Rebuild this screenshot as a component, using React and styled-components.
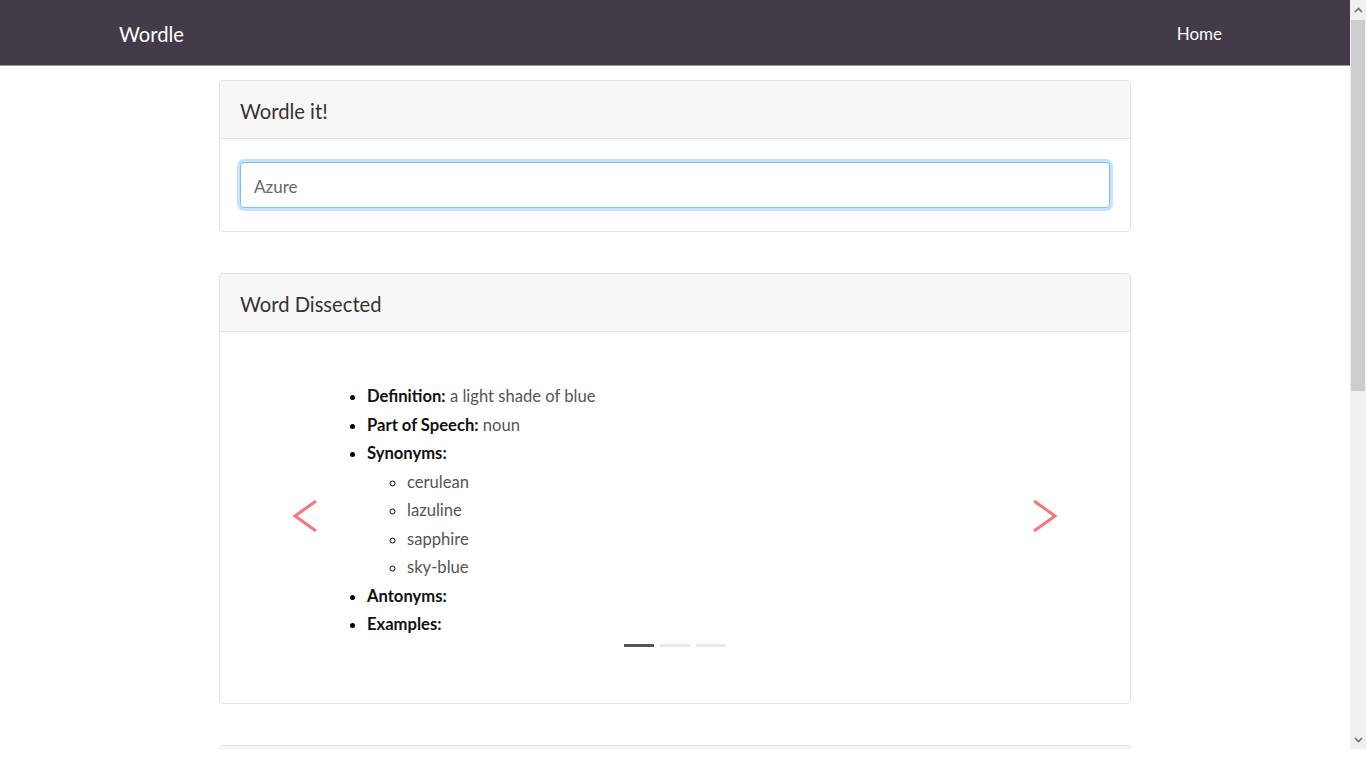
import React from "react";
import styled, { createGlobalStyle } from "styled-components";

const Global = createGlobalStyle`
  html, body { margin: 0; padding: 0; background: #fff; overflow: hidden; }
  body { font-family: "Lato", "Open Sans", sans-serif; color: #212529; }
  * { box-sizing: border-box; }
`;

const Frame = styled.div`
  height: 749px;
  display: flex;
  overflow: hidden;
`;

const Page = styled.div`
  flex: 1;
  min-width: 0;
  overflow: hidden;
`;

const ScrollBar = styled.div`
  width: 16px;
  flex: 0 0 16px;
  background: #f0f0f0;
  display: flex;
  flex-direction: column;
  align-items: center;
`;

const ScrollArrow = styled.div`
  height: 19px;
  width: 100%;
  display: flex;
  align-items: center;
  justify-content: center;
`;

const Track = styled.div`
  flex: 1;
  width: 100%;
  padding: 1px 1px 0;
`;

const Thumb = styled.div`
  height: 371px;
  background: #cdcdcd;
`;

const Navbar = styled.nav`
  height: 66px;
  background: #433c48;
  border-bottom: 1px solid #9a9a9a;
`;

const NavInner = styled.div`
  width: 1140px;
  margin: 0 auto;
  height: 100%;
  display: flex;
  align-items: center;
  justify-content: space-between;
  padding: 0 15px 0 14px;
`;

const Brand = styled.a`
  color: #fff;
  font-size: 20.2px;
  padding-top: 2px;
  text-decoration: none;
`;

const NavLink = styled.a`
  color: #fff;
  font-size: 17px;
  padding: 2px 8px 0;
  text-decoration: none;
`;

const Main = styled.main`
  width: 912px;
  margin: 0 auto;
  padding: 14px 0 700px;
  display: flex;
  flex-direction: column;
  gap: 41px;
`;

const Card = styled.section`
  border: 1px solid #e2e2e2;
  border-radius: 4px;
  background: #fff;
  overflow: hidden;
`;

const CardHeader = styled.header`
  height: 58px;
  background: #f7f7f7;
  border-bottom: 1px solid #e2e2e2;
  display: flex;
  align-items: center;
  padding: 3px 20px 0;
  font-size: 20.2px;
  color: #333;
`;

const CardBody = styled.div`
  padding: ${(p) => p.$pad || "23px 20px"};
`;

const Input = styled.input`
  display: block;
  width: 100%;
  height: 46px;
  border: 1px solid #80bdff;
  border-radius: 4px;
  box-shadow: 0 0 0 3px rgba(0, 123, 255, 0.22);
  padding: 2px 13px 0;
  font-family: "Lato", "Open Sans", sans-serif;
  font-size: 17px;
  color: #666;
  outline: none;
`;

const Carousel = styled.div`
  position: relative;
  height: 330px;
  display: flex;
  flex-direction: column;
  align-items: center;
`;

const Slide = styled.div`
  align-self: stretch;
  padding: 30px 0 0 87px;
`;

const List = styled.ul`
  margin: 0;
  padding-left: 40px;
  font-size: 16.6px;
  line-height: 28.5px;
  list-style: ${(p) => (p.$nested ? "circle" : "disc")};
  color: #000;
`;

const Item = styled.li`
  padding-left: 0;
`;

const Label = styled.strong`
  font-weight: 700;
  color: #111;
`;

const Value = styled.span`
  color: #555;
`;

const Indicators = styled.ol`
  list-style: none;
  display: flex;
  gap: 6px;
  margin: 5px 0 0 0;
  padding: 0;
`;

const Dot = styled.li`
  width: 30px;
  height: 3px;
  background: ${(p) => (p.$active ? "#555" : "#e9e9e9")};
`;

const Control = styled.button`
  position: absolute;
  top: 0;
  bottom: 0;
  ${(p) => (p.$side === "left" ? "left: 0;" : "right: 0;")}
  width: 15%;
  border: none;
  background: transparent;
  display: flex;
  align-items: center;
  justify-content: center;
  cursor: pointer;
  padding: 0 0 2px;
`;

const Arrow = ({ dir }) => (
  <svg width="26" height="34" viewBox="0 0 26 34" fill="none">
    {dir === "left" ? (
      <path d="M24 2 L3 17 L24 32" stroke="#f87676" strokeWidth="3" />
    ) : (
      <path d="M2 2 L23 17 L2 32" stroke="#f87676" strokeWidth="3" />
    )}
  </svg>
);

const Chevron = ({ up }) => (
  <svg width="9" height="6" viewBox="0 0 9 6" fill="none">
    <path
      d={up ? "M1 5 L4.5 1.5 L8 5" : "M1 1 L4.5 4.5 L8 1"}
      stroke="#6e6e6e"
      strokeWidth="1.6"
    />
  </svg>
);

export default function App() {
  return (
    <>
      <Global />
      <Frame>
        <Page>
          <Navbar>
            <NavInner>
              <Brand href="#">Wordle</Brand>
              <NavLink href="#">Home</NavLink>
            </NavInner>
          </Navbar>
          <Main>
            <Card>
              <CardHeader>Wordle it!</CardHeader>
              <CardBody>
                <Input defaultValue="Azure" />
              </CardBody>
            </Card>
            <Card>
              <CardHeader>Word Dissected</CardHeader>
              <CardBody $pad="20px 20px 21px">
                <Carousel>
                  <Slide>
                    <List>
                      <Item>
                        <Label>Definition:</Label> <Value>a light shade of blue</Value>
                      </Item>
                      <Item>
                        <Label>Part of Speech:</Label> <Value>noun</Value>
                      </Item>
                      <Item>
                        <Label>Synonyms:</Label>
                        <List $nested>
                          <Item><Value>cerulean</Value></Item>
                          <Item><Value>lazuline</Value></Item>
                          <Item><Value>sapphire</Value></Item>
                          <Item><Value>sky-blue</Value></Item>
                        </List>
                      </Item>
                      <Item>
                        <Label>Antonyms:</Label>
                      </Item>
                      <Item>
                        <Label>Examples:</Label>
                      </Item>
                    </List>
                  </Slide>
                  <Indicators>
                    <Dot $active />
                    <Dot />
                    <Dot />
                  </Indicators>
                  <Control $side="left" aria-label="Previous">
                    <Arrow dir="left" />
                  </Control>
                  <Control $side="right" aria-label="Next">
                    <Arrow dir="right" />
                  </Control>
                </Carousel>
              </CardBody>
            </Card>
            <Card>
              <CardHeader aria-label="Word Cloud" />
              <CardBody />
            </Card>
          </Main>
        </Page>
        <ScrollBar>
          <ScrollArrow>
            <Chevron up />
          </ScrollArrow>
          <Track>
            <Thumb />
          </Track>
          <ScrollArrow>
            <Chevron />
          </ScrollArrow>
        </ScrollBar>
      </Frame>
    </>
  );
}
